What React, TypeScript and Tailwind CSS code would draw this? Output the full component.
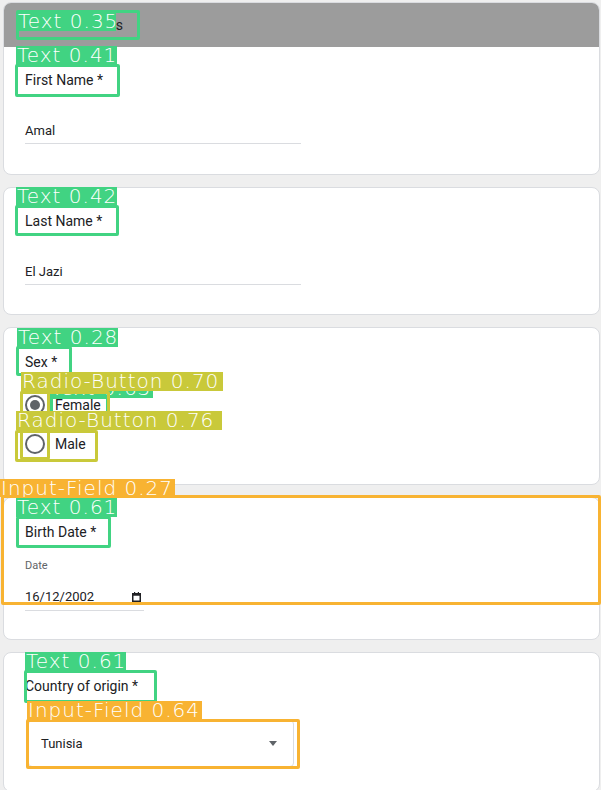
import type { ReactNode } from "react";

interface Mark {
  text: string;
  color: string;
  box: [number, number, number, number];
  label: [number, number, number, number];
  extra?: [number, number, number, number][];
}

const GREEN = "#41d382";
const YELLOW = "#c9c93a";
const ORANGE = "#f8b332";

// detection overlay drawn on top of the form
const marks: Mark[] = [
  { text: "Text 0.35", color: GREEN, box: [16, 10, 124, 30], label: [17, 12, 99, 19] },
  { text: "Text 0.41", color: GREEN, box: [15, 64, 105, 33], label: [16, 46, 101, 19] },
  { text: "Text 0.42", color: GREEN, box: [15, 205, 104, 31], label: [16, 187, 101, 19] },
  { text: "Text 0.28", color: GREEN, box: [16, 346, 56, 30], label: [17, 328, 101, 19] },
  { text: "Text 0.63", color: GREEN, box: [50, 396, 59, 24], label: [50, 379, 103, 19] },
  {
    text: "Radio-Button 0.70",
    color: YELLOW,
    box: [20, 391, 90, 30],
    label: [21, 372, 202, 19],
    extra: [[20, 391, 30, 30]],
  },
  {
    text: "Radio-Button 0.76",
    color: YELLOW,
    box: [15, 430, 83, 32],
    label: [16, 411, 206, 19],
    extra: [[20, 430, 30, 30]],
  },
  { text: "Input-Field 0.27", color: ORANGE, box: [1, 495, 600, 110], label: [0, 479, 175, 18] },
  { text: "Text 0.61", color: GREEN, box: [16, 516, 95, 32], label: [16, 498, 101, 19] },
  { text: "Text 0.61", color: GREEN, box: [24, 670, 133, 33], label: [25, 652, 101, 19] },
  { text: "Input-Field 0.64", color: ORANGE, box: [26, 719, 274, 50], label: [27, 701, 175, 19] },
];

function Overlay({ m }: { m: Mark }) {
  const boxes = [m.box, ...(m.extra ?? [])];
  return (
    <>
      {boxes.map(([x, y, w, h], i) => (
        <div
          key={i}
          className="absolute border-[3px] rounded-[2px]"
          style={{ left: x, top: y, width: w, height: h, borderColor: m.color }}
        />
      ))}
      <div
        className="absolute overflow-hidden pl-[1px] text-white text-[20px] leading-[19px] tracking-[1px] font-extralight whitespace-nowrap font-['DejaVu_Sans',sans-serif]"
        style={{ left: m.label[0], top: m.label[1], width: m.label[2], height: m.label[3], backgroundColor: m.color }}
      >
        {m.text}
      </div>
    </>
  );
}

function Card({ children, className = "" }: { children: ReactNode; className?: string }) {
  return <div className={`rounded-[8px] border border-[#dadce0] bg-white ${className}`}>{children}</div>;
}

function Label({ children }: { children: ReactNode }) {
  return <div className="text-[14px] leading-[16px] text-[#202124]">{children}</div>;
}

function TextInput({ value }: { value: string }) {
  return (
    <div className="mt-[31px] h-[25px] w-[276px] border-b border-[#dadce0] text-[13px] leading-[24px] text-[#202124]">
      {value}
    </div>
  );
}

function Radio({ label, checked }: { label: string; checked?: boolean }) {
  return (
    <div className="flex h-[20px] items-center gap-[10px]">
      <span className="flex h-[20px] w-[20px] items-center justify-center rounded-full border-2 border-[#5f6368]">
        {checked && <span className="h-[10px] w-[10px] rounded-full bg-[#5f6368]" />}
      </span>
      <span className="text-[14px] text-[#202124]">{label}</span>
    </div>
  );
}

export default function App() {
  return (
    <div className="relative h-[790px] w-[601px] overflow-hidden bg-[#efefef] font-['Roboto',sans-serif]">
      <div className="flex flex-col gap-[12px] pl-[3px] pr-[1px] pt-[2px]">
        {/* First name */}
        <Card>
          <div className="flex h-[44px] items-center rounded-t-[7px] bg-[#9c9c9c] px-[19px] text-[14px] text-[#202124]">
            Personal details
          </div>
          <div className="px-[21px] pb-[30px] pt-[25px]">
            <Label>First Name *</Label>
            <TextInput value="Amal" />
          </div>
        </Card>

        {/* Last name */}
        <Card className="px-[21px] pb-[29px] pt-[25px]">
          <Label>Last Name *</Label>
          <TextInput value="El Jazi" />
        </Card>

        {/* Sex */}
        <Card className="px-[21px] pb-[30px] pt-[26px]">
          <Label>Sex *</Label>
          <div className="mt-[25px] flex flex-col gap-[19px]">
            <Radio label="Female" checked />
            <Radio label="Male" />
          </div>
        </Card>

        {/* Birth date */}
        <Card className="px-[21px] pb-[28px] pt-[26px]">
          <Label>Birth Date *</Label>
          <div className="mt-[19px] text-[11px] leading-[14px] text-[#5f6368]">Date</div>
          <div className="mt-[11px] flex h-[27px] w-[119px] items-center justify-between border-b border-[#dadce0] pr-[3px] text-[13px] text-[#202124]">
            <span>16/12/2002</span>
            <svg width="9" height="10" viewBox="0 0 9 10" fill="none">
              <rect x="0.75" y="1.75" width="7.5" height="7.5" stroke="#202124" strokeWidth="1.5" />
              <rect x="0.75" y="1.75" width="7.5" height="2" fill="#202124" />
              <rect x="2" y="0" width="1.2" height="2" fill="#202124" />
              <rect x="5.8" y="0" width="1.2" height="2" fill="#202124" />
            </svg>
          </div>
        </Card>

        {/* Country */}
        <Card className="px-[21px] pb-[24px] pt-[25px]">
          <Label>Country of origin *</Label>
          <div className="ml-[3px] mt-[26px] flex h-[47px] w-[266px] items-center justify-between rounded-[4px] border border-[#dadce0] pl-[12px] pr-[16px] text-[13px] text-[#202124]">
            <span>Tunisia</span>
            <span className="h-0 w-0 border-x-[4.5px] border-t-[5px] border-x-transparent border-t-[#5f6368]" />
          </div>
        </Card>
      </div>

      {marks.map((m, i) => (
        <Overlay key={i} m={m} />
      ))}
    </div>
  );
}
